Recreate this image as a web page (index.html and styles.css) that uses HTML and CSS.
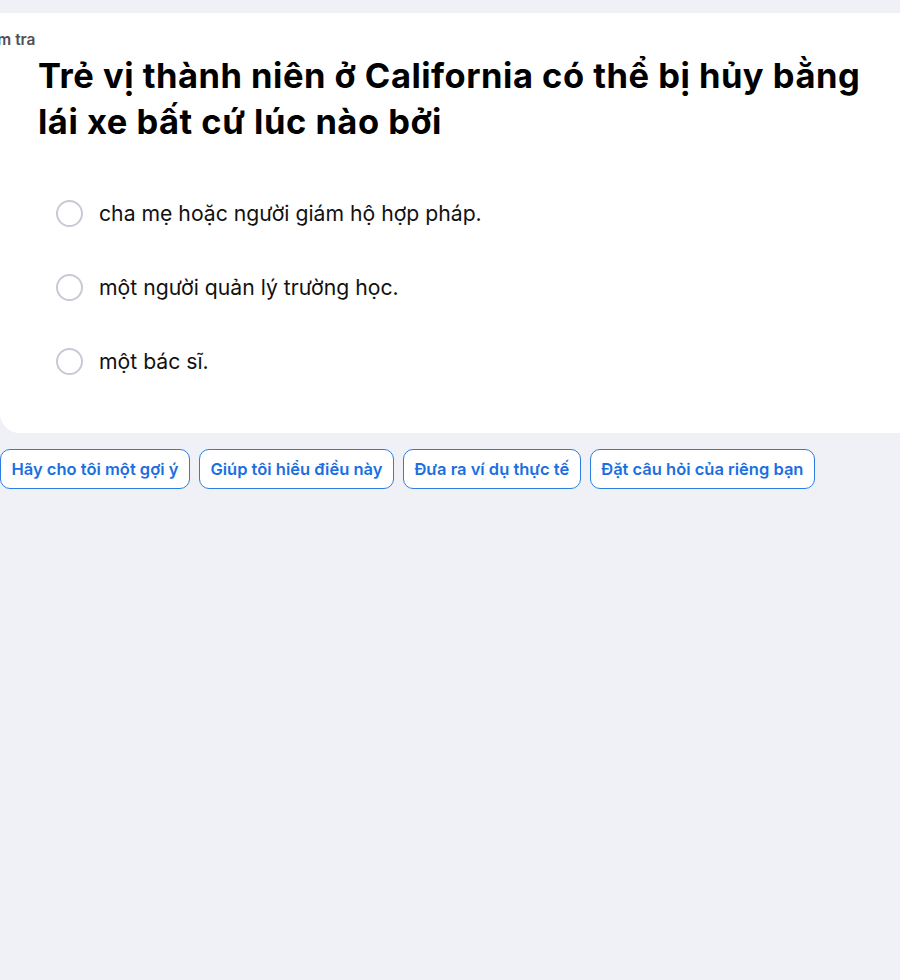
FILE: index.html
```html
<!DOCTYPE html>
<html lang="vi">
<head>
<meta charset="utf-8">
<link rel="stylesheet" href="styles.css">
</head>
<body>
<main class="page">
  <section class="card">
    <div class="label">Kiểm tra</div>
    <h1 class="question">Trẻ vị thành niên ở California có thể bị hủy bằng lái xe bất cứ lúc nào bởi</h1>
    <ul class="options">
      <li class="option"><span class="radio"></span><span class="option-text">cha mẹ hoặc người giám hộ hợp pháp.</span></li>
      <li class="option"><span class="radio"></span><span class="option-text">một người quản lý trường học.</span></li>
      <li class="option"><span class="radio"></span><span class="option-text">một bác sĩ.</span></li>
    </ul>
  </section>
  <div class="chips">
    <button class="chip">Hãy cho tôi một gợi ý</button>
    <button class="chip">Giúp tôi hiểu điều này</button>
    <button class="chip">Đưa ra ví dụ thực tế</button>
    <button class="chip">Đặt câu hỏi của riêng bạn</button>
  </div>
</main>
</body>
</html>
```
FILE: styles.css
```css
html, body {
  margin: 0;
  padding: 0;
  background: #f0f1f6;
  font-family: Inter, "Noto Sans", sans-serif;
  overflow: hidden;
}
.page {
  padding-top: 13px;
}
.card {
  background: #ffffff;
  width: 920px;
  border-radius: 0 16px 20px 20px;
  padding: 17px 0 0 0;
  box-sizing: border-box;
  height: 420px;
}
.label {
  font-size: 15.5px;
  font-weight: 600;
  color: #4f4f57;
  margin-left: -27px;
  line-height: 20px;
}
.question {
  margin: 3px 0 0 38px;
  font-size: 34.5px;
  font-weight: 700;
  line-height: 46px;
  color: #000;
  width: 850px;
  letter-spacing: 0.5px;
}
.options {
  list-style: none;
  margin: 54px 0 0 0;
  padding: 0 0 0 56px;
  display: flex;
  flex-direction: column;
  gap: 46px;
}
.option {
  display: flex;
  align-items: center;
  gap: 16px;
  height: 28px;
}
.radio {
  width: 23px;
  height: 23px;
  border: 2px solid #c8c9d6;
  border-radius: 50%;
  flex: none;
}
.option-text {
  font-size: 21.2px;
  color: #111;
}
.chips {
  display: flex;
  gap: 9px;
  margin-top: 16px;
}
.chip {
  font-family: inherit;
  height: 40px;
  padding: 0 10.5px;
  background: #fff;
  border: 1px solid #2b7de0;
  border-radius: 10px;
  color: #1c6fe0;
  font-size: 16.5px;
  font-weight: 600;
}
```
